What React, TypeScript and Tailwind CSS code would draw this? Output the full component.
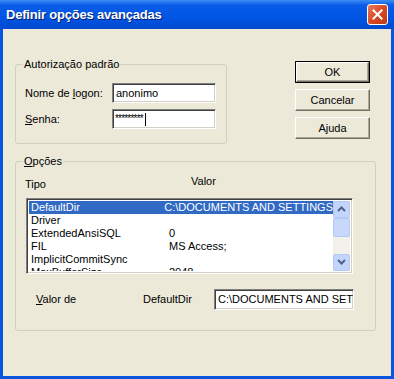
const rows = [
  { name: "DefaultDir", value: "C:\\DOCUMENTS AND SETTINGS" },
  { name: "Driver", value: "" },
  { name: "ExtendedAnsiSQL", value: "0" },
  { name: "FIL", value: "MS Access;" },
  { name: "ImplicitCommitSync", value: "" },
  { name: "MaxBufferSize", value: "2048" },
];

const sunken =
  "border border-t-[#808080] border-l-[#808080] border-r-white border-b-white shadow-[inset_1px_1px_0_#404040,inset_-1px_-1px_0_#d4d0c8] bg-white";

function Button({ children, primary }: { children: React.ReactNode; primary?: boolean }) {
  return (
    <div className={`h-[22px] w-[75px] ${primary ? "border border-black" : ""}`}>
      <div className="flex h-full w-full items-center justify-center border border-t-white border-l-white border-r-[#716f64] border-b-[#716f64] bg-[#ece9d8] shadow-[inset_-1px_-1px_0_#aca899] text-black">
        {children}
      </div>
    </div>
  );
}

function Group({ label, className, children }: { label: React.ReactNode; className: string; children: React.ReactNode }) {
  return (
    <div className={`relative rounded-[3px] border border-[#d0d0bf] ${className}`}>
      <span className="absolute left-[7px] top-[-7px] bg-[#ece9d8] px-[1px] leading-[13px]">{label}</span>
      {children}
    </div>
  );
}

function ScrollArrow({ up }: { up?: boolean }) {
  return (
    <div className="flex h-[17px] w-[17px] items-center justify-center rounded-[2px] border border-[#b4c8f6] bg-[#c4d5fb]">
      <svg width="9" height="6" viewBox="0 0 9 6">
        <path d={up ? "M1 5 L4.5 1.5 L8 5" : "M1 1 L4.5 4.5 L8 1"} fill="none" stroke="#4d6185" strokeWidth="2" />
      </svg>
    </div>
  );
}

export default function App() {
  return (
    <div className="flex h-[379px] w-[394px] flex-col bg-[#0a55e0] font-['Liberation_Sans',sans-serif] text-[11px] text-black">
      <div className="flex h-[29px] items-center justify-between bg-[linear-gradient(#3c8cf5,#0a5ce6_18%,#0055e5_60%,#0049cf)] pl-[6px] pr-[6px]">
        <span className="text-[13px] font-bold tracking-[-0.2px] text-white [text-shadow:1px_1px_0_#0a1f66]">
          Definir opções avançadas
        </span>
        <div className="flex h-[21px] w-[21px] items-center justify-center rounded-[3px] border border-white bg-[linear-gradient(135deg,#e97a5e,#d7461f_55%,#c0391a)]">
          <svg width="11" height="11" viewBox="0 0 11 11">
            <path d="M1.5 1.5 L9.5 9.5 M9.5 1.5 L1.5 9.5" stroke="white" strokeWidth="2" strokeLinecap="square" />
          </svg>
        </div>
      </div>

      <div className="mx-[3px] mb-[3px] flex-1 bg-[#ece9d8] px-[12px] pt-[32px]">
        <div className="flex">
          <Group label="Autorização padrão" className="mt-[3px] h-[80px] w-[212px]">
            <div className="flex flex-col gap-[6px] pl-[9px] pt-[18px]">
              <div className="flex items-center">
                <span className="w-[87px]">
                  Nome de <span className="underline">l</span>ogon:
                </span>
                <div className={`flex h-[20px] w-[104px] items-center pl-[3px] ${sunken}`}>anonimo</div>
              </div>
              <div className="flex items-center">
                <span className="w-[87px]">
                  <span className="underline">S</span>enha:
                </span>
                <div className={`flex h-[20px] w-[104px] items-center pl-[2px] ${sunken}`}>
                  <span className="text-[10px] leading-[10px] tracking-[-0.8px]">*********</span>
                  <span className="ml-[2px] h-[13px] w-[1px] bg-black" />
                </div>
              </div>
            </div>
          </Group>
          <div className="ml-[68px] flex flex-col gap-[6px]">
            <Button primary>OK</Button>
            <Button>Cancelar</Button>
            <Button>
              <span>
                A<span className="underline">j</span>uda
              </span>
            </Button>
          </div>
        </div>

        <Group
          label={
            <span>
              <span className="underline">O</span>pções
            </span>
          }
          className="mt-[17px] h-[170px] w-[361px]"
        >
          <div className="flex pl-[9px] pt-[11px]">
            <span className="mt-[3px] w-[166px]">Tipo</span>
            <span>Valor</span>
          </div>
          <div className={`ml-[10px] mt-[5px] flex h-[76px] w-[327px] p-[2px] ${sunken}`}>
            <div className="flex-1 overflow-hidden">
              {rows.map((r, i) => (
                <div
                  key={r.name}
                  className={`flex h-[13px] items-center pl-[2px] leading-[13px] ${i === 0 ? "bg-[#316ac5] text-white" : ""}`}
                >
                  <span className="w-[138px] whitespace-nowrap">{r.name}</span>
                  <span className="whitespace-nowrap">{r.value}</span>
                </div>
              ))}
            </div>
            <div className="flex w-[17px] flex-col bg-[#f3f1ec]">
              <ScrollArrow up />
              <div className="h-[19px] w-[17px] rounded-[2px] border border-[#b4c8f6] bg-[#c8d8fb]" />
              <div className="flex-1" />
              <ScrollArrow />
            </div>
          </div>
          <div className="mt-[15px] flex items-center">
            <span className="ml-[20px] w-[107px]">
              <span className="underline">V</span>alor de
            </span>
            <span className="w-[71px]">DefaultDir</span>
            <div className={`flex h-[21px] w-[140px] items-center overflow-hidden whitespace-nowrap pl-[3px] ${sunken}`}>
              C:\DOCUMENTS AND SETTINGS
            </div>
          </div>
        </Group>
      </div>
    </div>
  );
}
